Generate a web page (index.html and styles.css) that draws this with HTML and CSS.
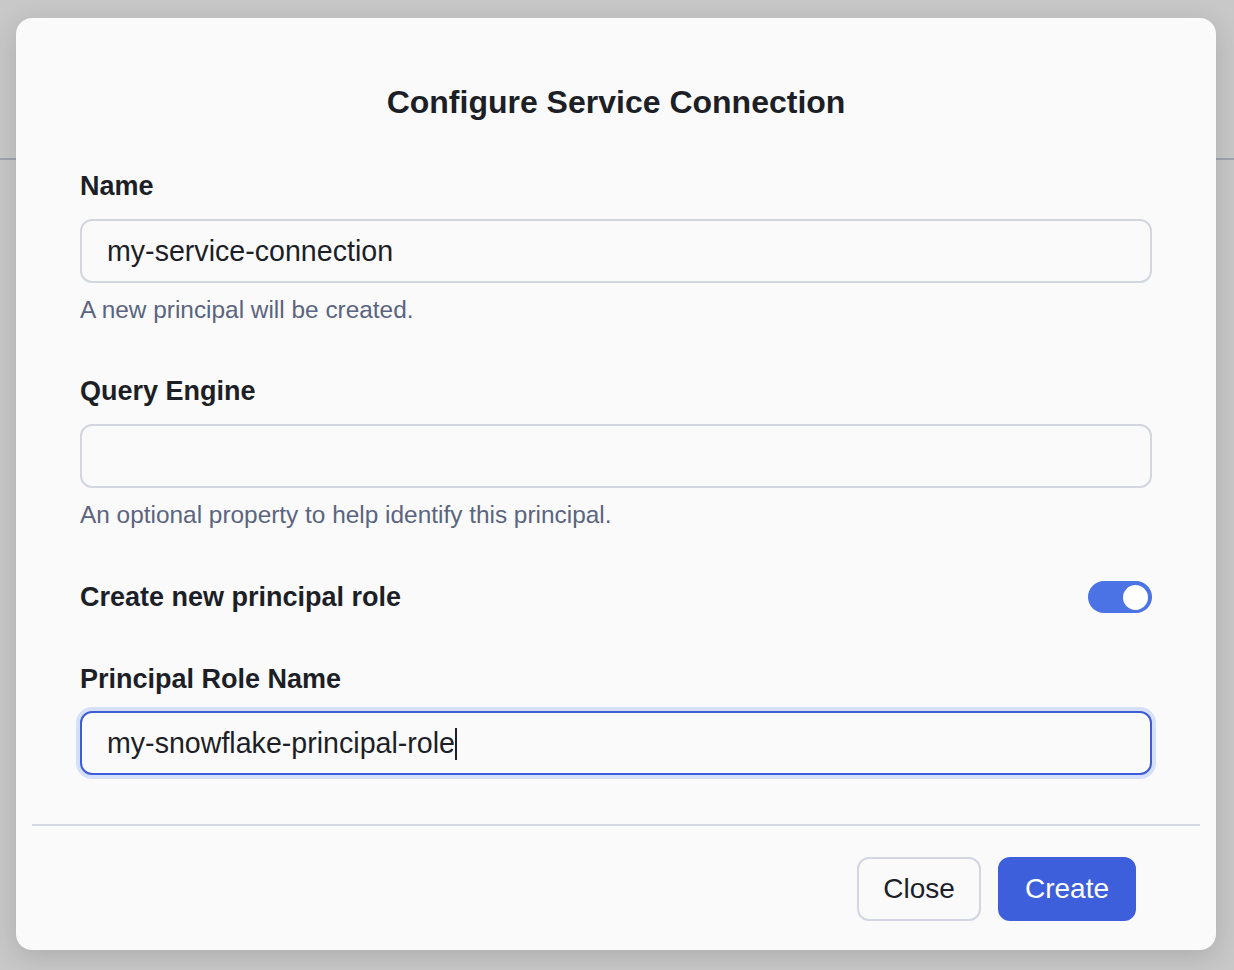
FILE: index.html
```html
<!DOCTYPE html>
<html lang="en">
<head>
<meta charset="utf-8">
<title>Configure Service Connection</title>
<link rel="stylesheet" href="styles.css">
</head>
<body>
<div class="page">
  <div class="page-header"></div>
</div>
<div class="modal" role="dialog" aria-labelledby="dlg-title">
  <h1 id="dlg-title" class="modal-title">Configure Service Connection</h1>
  <div class="modal-body">
    <div class="field">
      <label class="field-label" for="f-name">Name</label>
      <input id="f-name" class="text-input" type="text" value="my-service-connection">
      <p class="field-help">A new principal will be created.</p>
    </div>
    <div class="field field-before-toggle">
      <label class="field-label" for="f-engine">Query Engine</label>
      <input id="f-engine" class="text-input" type="text" value="">
      <p class="field-help">An optional property to help identify this principal.</p>
    </div>
    <div class="toggle-row">
      <span class="field-label">Create new principal role</span>
      <span class="switch is-on" role="switch" aria-checked="true"><span class="switch-knob"></span></span>
    </div>
    <div class="field field-last">
      <label class="field-label">Principal Role Name</label>
      <div class="text-input is-focused">my-snowflake-principal-role<span class="caret"></span></div>
    </div>
  </div>
  <div class="modal-footer">
    <button class="btn btn-secondary" type="button">Close</button>
    <button class="btn btn-primary" type="button">Create</button>
  </div>
</div>
</body>
</html>
```
FILE: styles.css
```css
* { box-sizing: border-box; }
html, body { margin: 0; padding: 0; }
body {
  width: 1234px;
  height: 970px;
  overflow: hidden;
  background: #c8c8c8;
  font-family: "Liberation Sans", Arial, Helvetica, sans-serif;
  color: #1d1f27;
  position: relative;
}
.page { height: 970px; }
.page-header {
  height: 160px;
  border-bottom: 2px solid #a1a4af;
}
.modal {
  position: absolute;
  left: 16px;
  top: 18px;
  width: 1200px;
  height: 932px;
  background: #fafafa;
  border-radius: 16px;
  box-shadow: 0 6px 28px rgba(0, 0, 0, 0.14);
  display: flex;
  flex-direction: column;
}
.modal-title {
  margin: 64px 0 0;
  font-size: 32px;
  line-height: 40px;
  font-weight: 700;
  text-align: center;
  color: #1d1f27;
}
.modal-body {
  padding: 46px 64px 0;
  display: flex;
  flex-direction: column;
}
.field { display: flex; flex-direction: column; margin-bottom: 47px; }
.field-before-toggle { margin-bottom: 48px; }
.field-last { margin-bottom: 49px; }
.field-label {
  font-size: 27px;
  line-height: 36px;
  font-weight: 700;
  color: #1d1f27;
  margin-bottom: 15px;
}
.field-last .field-label { margin-bottom: 14px; }
.text-input {
  display: block;
  width: 100%;
  height: 64px;
  border: 2px solid #d3d5e0;
  border-radius: 12px;
  background: #fafafa;
  padding: 0 25px;
  font-family: "Liberation Sans", Arial, Helvetica, sans-serif;
  font-size: 28.6px;
  line-height: 60px;
  color: #1d1f27;
  outline: none;
}
.text-input.is-focused {
  border-color: #3c5dd8;
  box-shadow: 0 0 0 4px #d7e0fb;
  white-space: nowrap;
}
.caret {
  display: inline-block;
  width: 2px;
  height: 32px;
  background: #1d1f27;
  vertical-align: -7px;
}
.field-help {
  margin: 11px 0 0;
  font-size: 24.4px;
  line-height: 32px;
  color: #5b6480;
}
.toggle-row {
  display: flex;
  align-items: center;
  justify-content: space-between;
  height: 36px;
  margin-bottom: 46px;
}
.toggle-row .field-label { margin-bottom: 0; }
.switch {
  width: 64px;
  height: 32px;
  border-radius: 16px;
  background: #4c73e6;
  display: flex;
  align-items: center;
  justify-content: flex-end;
  padding: 0 4px;
}
.switch-knob {
  width: 25px;
  height: 25px;
  border-radius: 50%;
  background: #ffffff;
}
.modal-footer {
  margin: 0 16px;
  border-top: 2px solid #d5d7e2;
  padding: 31px 64px 0;
  display: flex;
  justify-content: flex-end;
  gap: 17px;
}
.btn {
  height: 64px;
  border-radius: 12px;
  font-family: "Liberation Sans", Arial, Helvetica, sans-serif;
  font-size: 28px;
  padding: 0 25px;
  cursor: pointer;
}
.btn-secondary {
  background: #fafafa;
  border: 2px solid #d3d6e2;
  color: #1d1f27;
  padding: 0 24px;
}
.btn-primary {
  background: #3d5fdb;
  border: 2px solid #3d5fdb;
  color: #ffffff;
}
```
